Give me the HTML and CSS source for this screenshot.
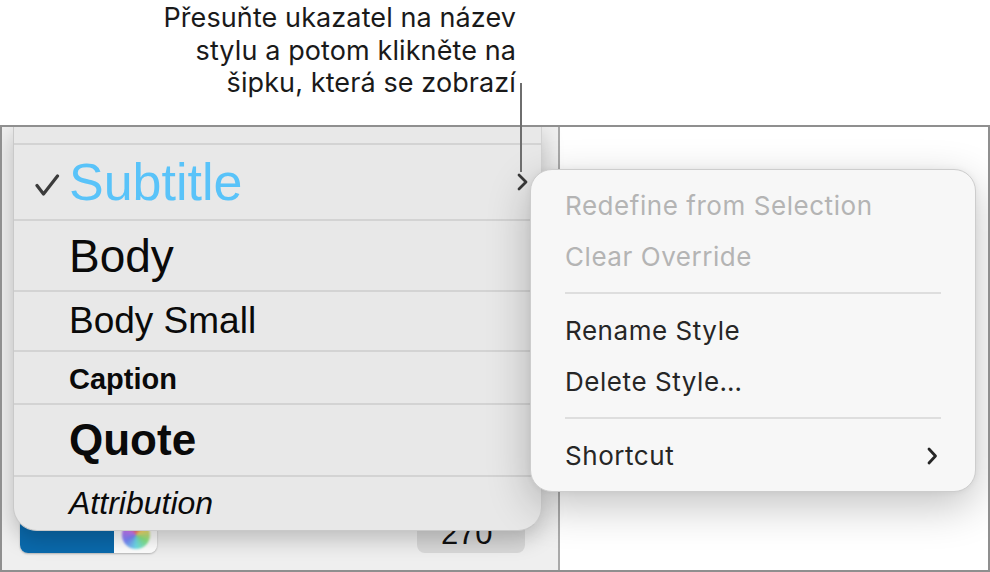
FILE: index.html
```html
<!DOCTYPE html>
<html lang="cs">
<head>
<meta charset="utf-8">
<link rel="stylesheet" href="styles.css">
</head>
<body>
<div class="page">
  <div class="callout">
    <p class="callout-text">Přesuňte ukazatel na název<br>stylu a potom klikněte na<br>šipku, která se zobrazí</p>
  </div>
  <div class="leader"></div>

  <div class="window">
    <div class="sidebar">
      <div class="controls">
        <div class="color-well">
          <div class="swatch"></div>
          <div class="wheel-cell"><div class="wheel"></div></div>
        </div>
        <div class="angle">270°</div>
      </div>
    </div>
    <div class="content"></div>

    <div class="styles-list">
      <div class="row row-top"></div>
      <div class="row row-subtitle">
        <span class="check">
          <svg width="25" height="22" viewBox="0 0 25 22"><path d="M2 11.5 L8.5 20 L22.5 2" fill="none" stroke="#3b3b3b" stroke-width="3.2" stroke-linecap="round" stroke-linejoin="round"/></svg>
        </span>
        <span class="name subtitle">Subtitle</span>
        <span class="row-chev">
          <svg width="13" height="20" viewBox="0 0 13 20"><path d="M3 3 L10 10 L3 17" fill="none" stroke="#3a3a3a" stroke-width="2.8" stroke-linecap="round" stroke-linejoin="round"/></svg>
        </span>
      </div>
      <div class="row row-body"><span class="name body-s">Body</span></div>
      <div class="row row-bodysmall"><span class="name bodysmall-s">Body Small</span></div>
      <div class="row row-caption"><span class="name caption-s">Caption</span></div>
      <div class="row row-quote"><span class="name quote-s">Quote</span></div>
      <div class="row row-attr"><span class="name attr-s">Attribution</span></div>
    </div>

    <div class="menu">
      <div class="item disabled">Redefine from Selection</div>
      <div class="item disabled">Clear Override</div>
      <div class="sep"></div>
      <div class="item">Rename Style</div>
      <div class="item">Delete Style…</div>
      <div class="sep"></div>
      <div class="item">Shortcut
        <svg class="item-chev" width="14" height="20" viewBox="0 0 14 20"><path d="M4 3 L10.5 10 L4 17" fill="none" stroke="#262626" stroke-width="2.8" stroke-linecap="round" stroke-linejoin="round"/></svg>
      </div>
    </div>
  </div>
</div>
</body>
</html>
```
FILE: styles.css
```css
html, body {
  margin: 0;
  padding: 0;
  background: #ffffff;
}

.page {
  position: relative;
  width: 990px;
  height: 572px;
  overflow: hidden;
}

.callout {
  height: 125px;
  width: 516px;
  box-sizing: border-box;
  padding-top: 2px;
}

.callout-text {
  margin: 0;
  text-align: right;
  font-family: Inter, "Liberation Sans", sans-serif;
  font-size: 27px;
  line-height: 32.5px;
  letter-spacing: 0.1px;
  color: #1a1a1a;
}

.leader {
  position: absolute;
  left: 520px;
  top: 83px;
  width: 2px;
  height: 89px;
  background: #6e6e6e;
  z-index: 5;
}

.window {
  position: relative;
  height: 447px;
  box-sizing: border-box;
  border: 2px solid #8f8f8f;
  display: grid;
  grid-template-columns: 558px 1fr;
  overflow: hidden;
}

.sidebar {
  background: #efefef;
  border-right: 2px solid #a9a9a9;
  display: flex;
  flex-direction: column;
  justify-content: flex-end;
  padding: 0 33px 17px 18px;
}

.content {
  background: #ffffff;
}

.controls {
  display: flex;
  align-items: flex-end;
  justify-content: space-between;
}

.color-well {
  display: flex;
  height: 48px;
  width: 137px;
  border-radius: 8px;
  overflow: hidden;
  box-shadow: 0 1px 2px rgba(0,0,0,0.25);
}

.swatch {
  width: 94px;
  background: #0a6aad;
}

.wheel-cell {
  flex: 1;
  background: #ffffff;
  display: flex;
  align-items: flex-end;
  justify-content: center;
  padding-bottom: 4px;
}

.wheel {
  width: 28px;
  height: 28px;
  border-radius: 50%;
  background: conic-gradient(#ff4b4b, #ffd84b, #6be36b, #4bd8e6, #5b6bff, #c95bff, #ff4b4b);
  filter: blur(1px);
  opacity: 0.8;
}

.angle {
  width: 108px;
  height: 48px;
  border-radius: 8px;
  background: #d9d9d9;
  box-sizing: border-box;
  padding: 11px 20px 0 0;
  text-align: right;
  font-family: "Liberation Sans", sans-serif;
  font-size: 31px;
  color: #111;
}

.styles-list {
  position: absolute;
  left: 11px;
  top: 0;
  width: 527px;
  background: #e8e8e8;
  border-left: 1px solid #c9c9c9;
  border-right: 1px solid #d2d2d2;
  border-bottom: 1px solid #c9c9c9;
  border-radius: 0 0 24px 24px;
  box-shadow: 0 8px 22px rgba(0,0,0,0.22);
  font-family: "Liberation Sans", Arial, sans-serif;
  color: #0a0a0a;
  z-index: 2;
}

.row {
  box-sizing: border-box;
  border-bottom: 2px solid #d3d3d3;
  display: flex;
  align-items: center;
  padding-left: 55px;
  position: relative;
}

.row-top { height: 18px; }
.row-subtitle { height: 76px; padding-left: 21px; }
.row-body { height: 71px; }
.row-bodysmall { height: 60px; }
.row-caption { height: 53px; padding-top: 3px; }
.row-quote { height: 72px; }
.row-attr { height: 53px; border-bottom: none; }

.check {
  width: 34px;
  display: flex;
  align-items: center;
  margin-top: 6px;
}

.row-chev {
  margin-left: auto;
  margin-right: 12px;
  display: flex;
}

.name { white-space: nowrap; }

.subtitle {
  font-size: 52px;
  color: #59c3f9;
}

.body-s { font-size: 46px; }
.bodysmall-s { font-size: 37px; }
.caption-s { font-size: 29px; font-weight: bold; }
.quote-s { font-size: 44px; font-weight: bold; }
.attr-s { font-size: 32px; font-style: italic; }

.menu {
  position: absolute;
  left: 528px;
  top: 42px;
  width: 446px;
  height: 323px;
  box-sizing: border-box;
  padding: 10px 34px 0 34px;
  background: #f7f7f7;
  border: 1px solid #cdcdcd;
  border-radius: 22px;
  box-shadow: 0 14px 44px rgba(0,0,0,0.24), 0 0 6px rgba(0,0,0,0.06);
  font-family: Inter, "Liberation Sans", sans-serif;
  font-size: 26px;
  letter-spacing: 0.55px;
  color: #262626;
  z-index: 3;
}

.item {
  height: 51px;
  display: flex;
  align-items: center;
}

.item.disabled {
  color: #b4b4b4;
}

.sep {
  height: 2px;
  margin: 10px 0 11px;
  background: #dedede;
}

.item-chev {
  margin-left: auto;
  margin-right: 2px;
}
```
